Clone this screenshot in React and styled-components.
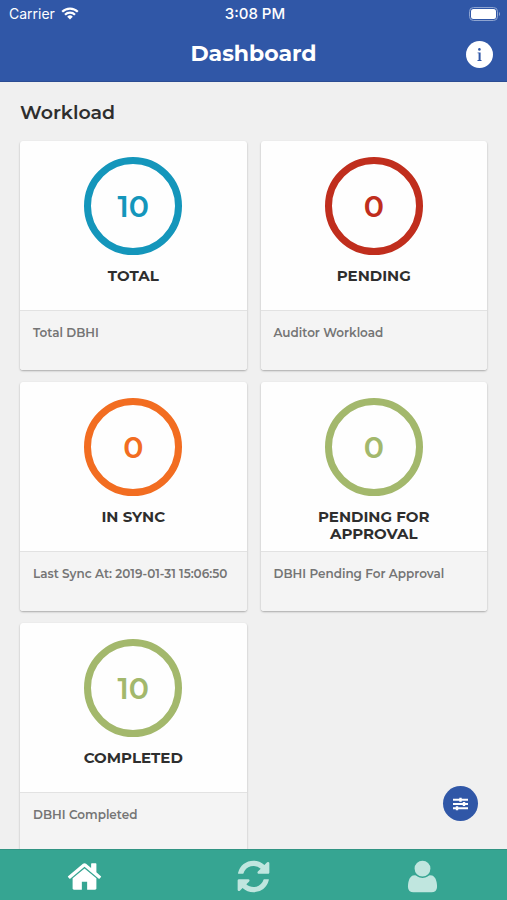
import React from "react";
import styled, { createGlobalStyle, ThemeProvider } from "styled-components";

const theme = {
  font: `Montserrat, Inter, "Liberation Sans", sans-serif`,
  systemFont: `Inter, "Liberation Sans", sans-serif`,
  colors: {
    primary: "#3057a7",
    nav: "#36a592",
    page: "#f0f0f0",
    card: "#fefefe",
    footer: "#f4f4f4",
    border: "#e2e2e2",
    dark: "#2e2e2e",
    grey: "#757575",
    blue: "#1496bb",
    red: "#c02e1d",
    orange: "#f26d21",
    green: "#a3b86c",
  },
};

const GlobalStyle = createGlobalStyle`
  * {
    box-sizing: border-box;
  }
  body {
    margin: 0;
    font-family: ${theme.font};
  }
`;

const Screen = styled.div`
  display: flex;
  flex-direction: column;
  height: 100vh;
  background: ${(props) => props.theme.colors.page};
`;

const Header = styled.header`
  color: #fff;
  background: ${(props) => props.theme.colors.primary};
  border-bottom: 1px solid #2b4c93;
`;

const StatusBar = styled.div`
  display: grid;
  grid-template-columns: 1fr auto 1fr;
  align-items: center;
  height: 27px;
  padding: 0 6px 0 9px;
  font-family: ${(props) => props.theme.systemFont};
  font-size: 14px;
`;

const Carrier = styled.span`
  display: flex;
  align-items: center;
  gap: 6px;
`;

const Clock = styled.time`
  font-size: 15px;
  font-weight: 500;
`;

const BatteryIcon = styled.svg`
  justify-self: end;
`;

const TitleBar = styled.div`
  display: grid;
  grid-template-columns: 1fr auto 1fr;
  align-items: center;
  height: 54px;
  padding: 0 14px;
`;

const Title = styled.h1`
  grid-column: 2;
  margin: 0;
  font-size: 22px;
  font-weight: 700;
  line-height: 28px;
`;

const InfoButton = styled.button`
  justify-self: end;
  display: flex;
  padding: 0;
  border: 0;
  background: none;
  cursor: pointer;
`;

const Content = styled.div`
  position: relative;
  flex: 1;
  min-height: 0;
`;

const Main = styled.main`
  height: 100%;
  padding: 18px 20px;
  overflow-y: auto;
  scrollbar-width: none;
`;

const SectionTitle = styled.h2`
  margin: 0 0 15px;
  color: ${(props) => props.theme.colors.dark};
  font-size: 19px;
  font-weight: 600;
  line-height: 26px;
`;

const CardGrid = styled.div`
  display: grid;
  grid-template-columns: 1fr 1fr;
  gap: 12px 14px;
`;

const Card = styled.article`
  border-radius: 3px;
  background: ${(props) => props.theme.colors.card};
  box-shadow: 0 1px 2px rgba(0, 0, 0, 0.3);
  overflow: hidden;
`;

const CardBody = styled.div`
  display: flex;
  flex-direction: column;
  align-items: center;
  min-height: 169px;
  padding: 16px 30px 8px;
`;

const Ring = styled.div`
  display: flex;
  align-items: center;
  justify-content: center;
  width: 98px;
  height: 98px;
  margin-bottom: 12px;
  border: 7px solid ${(props) => props.theme.colors[props.$color]};
  border-radius: 50%;
  color: ${(props) => props.theme.colors[props.$color]};
  font-size: 30px;
  font-weight: 600;
`;

const CardLabel = styled.h3`
  margin: 0;
  color: ${(props) => props.theme.colors.dark};
  font-size: 15px;
  font-weight: 700;
  line-height: 17px;
  text-align: center;
`;

const CardFooter = styled.p`
  min-height: 60px;
  margin: 0;
  padding: 14px 13px;
  border-top: 1px solid ${(props) => props.theme.colors.border};
  color: ${(props) => props.theme.colors.grey};
  background: ${(props) => props.theme.colors.footer};
  font-size: 12px;
  font-weight: 600;
  line-height: 16px;
`;

const FilterButton = styled.button`
  position: absolute;
  right: 29px;
  bottom: 28px;
  display: flex;
  align-items: center;
  justify-content: center;
  width: 35px;
  height: 35px;
  padding: 0;
  border: 0;
  border-radius: 50%;
  color: #fff;
  background: ${(props) => props.theme.colors.primary};
  cursor: pointer;
`;

const BottomNav = styled.nav`
  display: grid;
  grid-template-columns: repeat(3, 1fr);
  height: 51px;
  border-top: 1px solid #319483;
  background: ${(props) => props.theme.colors.nav};
`;

const NavLink = styled.a`
  display: flex;
  align-items: center;
  justify-content: center;
  padding-top: 2px;
  color: ${(props) => (props.$active ? "#fff" : "#c0e6df")};
`;

const cards = [
  { value: 10, label: "TOTAL", note: "Total DBHI", color: "blue" },
  { value: 0, label: "PENDING", note: "Auditor Workload", color: "red" },
  {
    value: 0,
    label: "IN SYNC",
    note: "Last Sync At: 2019-01-31 15:06:50",
    color: "orange",
  },
  {
    value: 0,
    label: "PENDING FOR APPROVAL",
    note: "DBHI Pending For Approval",
    color: "green",
  },
  { value: 10, label: "COMPLETED", note: "DBHI Completed", color: "green" },
];

const navItems = [
  {
    label: "Home",
    href: "#home",
    active: true,
    path: "M1472 992v480q0 26-19 45t-45 19h-384v-384h-256v384h-384q-26 0-45-19t-19-45v-480q0-1 .5-3t.5-3l575-474 575 474q1 2 1 6zm223-69l-62 74q-8 9-21 11h-3q-13 0-21-7l-692-577-692 577q-12 8-24 7-13-2-21-11l-62-74q-8-10-7-23.5t11-21.5l719-599q32-26 76-26t76 26l244 204v-195q0-14 9-23t23-9h192q14 0 23 9t9 23v408l219 182q10 8 11 21.5t-7 23.5z",
  },
  {
    label: "Sync",
    href: "#sync",
    path: "M1639 1056q0 5-1 7-64 268-268 434.5t-478 166.5q-146 0-282.5-55t-243.5-157l-129 129q-19 19-45 19t-45-19-19-45v-448q0-26 19-45t45-19h448q26 0 45 19t19 45-19 45l-137 137q71 66 161 102t187 36q134 0 250-65t186-179q11-17 53-117 8-23 30-23h192q13 0 22.5 9.5t9.5 22.5zm25-800v448q0 26-19 45t-45 19h-448q-26 0-45-19t-19-45 19-45l138-138q-148-137-349-137-134 0-250 65t-186 179q-11 17-53 117-8 23-30 23h-199q-13 0-22.5-9.5t-9.5-22.5v-7q65-268 270-434.5t480-166.5q146 0 284 55.5t245 156.5l130-129q19-19 45-19t45 19 19 45z",
  },
  {
    label: "Profile",
    href: "#profile",
    path: "M1600 1405q0 120-73 189.5t-194 69.5h-874q-121 0-194-69.5t-73-189.5q0-53 3.5-103.5t14-109 26.5-108.5 43-97.5 62-81 85.5-53.5 111.5-20q9 0 42 21.5t74.5 48 108 48 133.5 21.5 133.5-21.5 108-48 74.5-48 42-21.5q61 0 111.5 20t85.5 53.5 62 81 43 97.5 26.5 108.5 14 109 3.5 103.5zm-320-893q0 159-112.5 271.5t-271.5 112.5-271.5-112.5-112.5-271.5 112.5-271.5 271.5-112.5 271.5 112.5 112.5 271.5z",
  },
];

const WifiIcon = () => (
  <svg width="18" height="13" viewBox="0 0 18 13" fill="none" aria-hidden="true">
    <g stroke="currentColor" strokeWidth="2.2">
      <path d="M1.2 4.8a11 11 0 0 1 15.6 0" />
      <path d="M4 7.8a7 7 0 0 1 10 0" />
    </g>
    <path d="M9 12.6l-2.8-2.9a4 4 0 0 1 5.6 0z" fill="currentColor" />
  </svg>
);

const InfoIcon = () => (
  <svg width="27" height="27" viewBox="0 0 27 27" aria-hidden="true">
    <circle cx="13.5" cy="13.5" r="13.5" fill="#fff" />
    <g fill={theme.colors.primary}>
      <circle cx="13.4" cy="8.4" r="1.3" />
      <path d="M11.6 11.4h3v7.7h.9v.9h-4v-.9h1.1v-6.8h-1z" />
    </g>
  </svg>
);

const SlidersIcon = () => (
  <svg width="15" height="14" viewBox="0 0 15 14" aria-hidden="true">
    <g stroke="currentColor" strokeWidth="2">
      <path d="M0 2.7h15M0 7h15M0 11.3h15" />
      <path d="M7.5 0.7v4M11 5v4M4 9.3v4" strokeWidth="2.4" />
    </g>
  </svg>
);

const WorkloadCard = ({ value, label, note, color }) => (
  <Card>
    <CardBody>
      <Ring $color={color}>{value}</Ring>
      <CardLabel>{label}</CardLabel>
    </CardBody>
    <CardFooter>{note}</CardFooter>
  </Card>
);

const App = () => {
  return (
    <ThemeProvider theme={theme}>
      <GlobalStyle />
      <Screen>
        <Header>
          <StatusBar>
            <Carrier>
              Carrier
              <WifiIcon />
            </Carrier>
            <Clock>3:08 PM</Clock>
            <BatteryIcon width="32" height="14" viewBox="0 0 32 14" aria-hidden="true">
              <rect x="0.5" y="0.5" width="28" height="13" rx="4" fill="none" stroke="#8ea4d0" />
              <rect x="2" y="2" width="25" height="10" rx="2.5" fill="#fff" />
              <path d="M30 5a2.4 2.4 0 0 1 0 4z" fill="#8ea4d0" />
            </BatteryIcon>
          </StatusBar>
          <TitleBar>
            <Title>Dashboard</Title>
            <InfoButton type="button" aria-label="Information">
              <InfoIcon />
            </InfoButton>
          </TitleBar>
        </Header>
        <Content>
          <Main>
            <SectionTitle>Workload</SectionTitle>
            <CardGrid>
              {cards.map((card) => (
                <WorkloadCard key={card.label} {...card} />
              ))}
            </CardGrid>
          </Main>
          <FilterButton type="button" aria-label="Filter">
            <SlidersIcon />
          </FilterButton>
        </Content>
        <BottomNav>
          {navItems.map(({ label, href, active, path }) => (
            <NavLink key={label} href={href} aria-label={label} $active={active}>
              <svg width="37" height="37" viewBox="0 0 1792 1792" fill="currentColor" aria-hidden="true">
                <path d={path} />
              </svg>
            </NavLink>
          ))}
        </BottomNav>
      </Screen>
    </ThemeProvider>
  );
};

export default App;
